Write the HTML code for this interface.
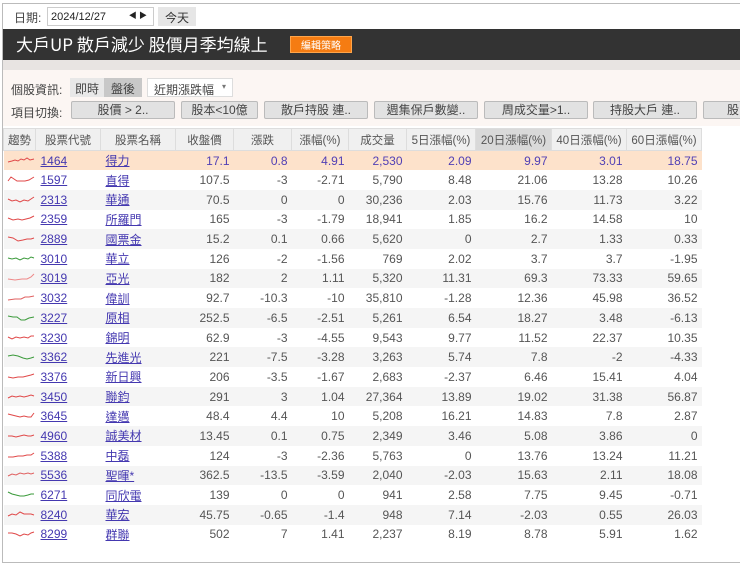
<!DOCTYPE html>
<html><head><meta charset="utf-8"><style>
*{box-sizing:border-box;margin:0;padding:0}
body{width:740px;height:557px;background:#fff;font-family:"Liberation Sans","Noto Sans CJK TC",sans-serif;font-size:12px;color:#444;position:relative;overflow:hidden}
.frame{position:absolute;left:2px;top:3px;width:740px;height:560px;border:1px solid #bbb;border-right:none}
.date{position:absolute;left:14px;top:9px;font-size:12px;color:#444}
.dbox{position:absolute;left:47px;top:7px;width:107px;height:19px;border:1px solid #ccc;background:#fff;font-size:11px;padding:3px 0 0 3px;color:#222}
.dbox span{position:absolute;right:6px;top:2px;font-size:8px}
.today{position:absolute;left:158px;top:7px;width:38px;height:19px;background:#e6e6e6;font-size:12px;text-align:center;padding-top:2px;color:#333}
.title{position:absolute;left:3px;top:29px;width:737px;height:31px;background:#333;color:#fff;font-size:17px;padding:3px 0 0 13px;font-family:"Noto Sans CJK TC",sans-serif;line-height:24px}
.edit{position:absolute;left:287px;top:7px;width:62px;height:17px;background:#f57c12;border:1px solid #ffa54a;font-size:10px;line-height:15px;text-align:center;color:#fff}
.strip{position:absolute;left:3px;top:60px;width:737px;height:10px;background:#e8e4e2}
.pink{position:absolute;left:3px;top:70px;width:737px;height:56px;background:#fcf6f3}
.lbl{position:absolute;font-size:12px;color:#444}
.seg{position:absolute;top:78px;height:19px;font-size:12px;text-align:center;padding-top:2px}
.sel{position:absolute;left:147px;top:78px;width:86px;height:19px;background:#fff;border:1px solid #ddd;padding:2px 0 0 6px;font-size:12px}
.sel span{position:absolute;right:6px;top:3px;font-size:8px;color:#777}
.btn{position:absolute;top:101px;height:18px;background:#e2e2e2;border:1px solid #bbb;border-radius:2px;text-align:center;font-size:12px;line-height:16px;color:#444}
table{position:absolute;left:3px;top:128px;border-collapse:collapse;width:698px;table-layout:fixed}
th{height:22px;background:#f0f0f0;border:1px solid #ddd;font-weight:normal;font-size:11.5px;color:#555}
th.d{background:#d9d9d9}
td{height:19.7px;text-align:right;padding-right:4px;font-size:12px;color:#555;white-space:nowrap}
td.c,td.n{text-align:left;padding-left:5px}
td.c a,td.n a{color:#4438b0;text-decoration:underline}
td.n{padding-left:5px}
tr.h td{background:#fde2cb;color:#5140b5}
tr:nth-child(odd) td{background:#f5f5f5}
tr.h:nth-child(odd) td{background:#fde2cb}
td.s{padding:0 0 0 3px;text-align:left}
</style></head><body>
<div class="frame"></div>
<div class="date">日期:</div>
<div class="dbox">2024/12/27<span>◀ ▶</span></div>
<div class="today">今天</div>
<div class="title">大戶UP 散戶減少 股價月季均線上<div class="edit">編輯策略</div></div>
<div class="strip"></div>
<div class="pink"></div>
<div class="lbl" style="left:11px;top:81px">個股資訊:</div>
<div class="seg" style="left:70px;width:34px;background:#e8e8e8">即時</div>
<div class="seg" style="left:104px;width:38px;background:#c8c8c8">盤後</div>
<div class="sel">近期漲跌幅<span>▾</span></div>
<div class="lbl" style="left:11px;top:104px">項目切換:</div>
<div class="btn" style="left:71px;width:104px">股價 &gt; 2..</div>
<div class="btn" style="left:181px;width:77px">股本&lt;10億</div>
<div class="btn" style="left:264px;width:104px">散戶持股 連..</div>
<div class="btn" style="left:374px;width:104px">週集保戶數變..</div>
<div class="btn" style="left:484px;width:104px">周成交量&gt;1..</div>
<div class="btn" style="left:593px;width:104px">持股大戶 連..</div>
<div class="btn" style="left:703px;width:60px">股</div>
<table>
<colgroup><col style="width:32px"><col style="width:65px"><col style="width:75px"><col style="width:58px"><col style="width:58px"><col style="width:57px"><col style="width:58px"><col style="width:69px"><col style="width:76px"><col style="width:75px"><col style="width:75px"></colgroup>
<tr><th>趨勢</th><th>股票代號</th><th>股票名稱</th><th>收盤價</th><th>漲跌</th><th>漲幅(%)</th><th>成交量</th><th>5日漲幅(%)</th><th class="d">20日漲幅(%)</th><th>40日漲幅(%)</th><th>60日漲幅(%)</th></tr>
<tbody id="b">
<tr class="h"><td class="s"><svg width="28" height="10"><polyline points="1,7 5,6 8,5 11,6 14,4 17,5 20,3 23,5 27,4" fill="none" stroke="#e04848" stroke-width="1"/></svg></td><td class="c"><a>1464</a></td><td class="n"><a>得力</a></td><td>17.1</td><td>0.8</td><td>4.91</td><td>2,530</td><td>2.09</td><td>9.97</td><td>3.01</td><td>18.75</td></tr>
<tr><td class="s"><svg width="28" height="10"><polyline points="1,7 4,3 7,5 10,7 14,7 18,7 22,6 27,3" fill="none" stroke="#e04848"/></svg></td><td class="c"><a>1597</a></td><td class="n"><a>直得</a></td><td>107.5</td><td>-3</td><td>-2.71</td><td>5,790</td><td>8.48</td><td>21.06</td><td>13.28</td><td>10.26</td></tr>
<tr><td class="s"><svg width="28" height="10"><polyline points="1,5 5,7 9,6 13,8 17,6 21,7 24,5 27,3" fill="none" stroke="#e04848"/></svg></td><td class="c"><a>2313</a></td><td class="n"><a>華通</a></td><td>70.5</td><td>0</td><td>0</td><td>30,236</td><td>2.03</td><td>15.76</td><td>11.73</td><td>3.22</td></tr>
<tr><td class="s"><svg width="28" height="10"><polyline points="1,5 6,7 11,6 15,7 19,6 23,5 27,3" fill="none" stroke="#e04848"/></svg></td><td class="c"><a>2359</a></td><td class="n"><a>所羅門</a></td><td>165</td><td>-3</td><td>-1.79</td><td>18,941</td><td>1.85</td><td>16.2</td><td>14.58</td><td>10</td></tr>
<tr><td class="s"><svg width="28" height="10"><polyline points="1,4 6,5 11,8 16,7 20,6 24,6 27,5" fill="none" stroke="#e04848"/></svg></td><td class="c"><a>2889</a></td><td class="n"><a>國票金</a></td><td>15.2</td><td>0.1</td><td>0.66</td><td>5,620</td><td>0</td><td>2.7</td><td>1.33</td><td>0.33</td></tr>
<tr><td class="s"><svg width="28" height="10"><polyline points="1,5 5,6 9,5 13,7 17,5 21,6 24,4 27,5" fill="none" stroke="#3a9a3a"/></svg></td><td class="c"><a>3010</a></td><td class="n"><a>華立</a></td><td>126</td><td>-2</td><td>-1.56</td><td>769</td><td>2.02</td><td>3.7</td><td>3.7</td><td>-1.95</td></tr>
<tr><td class="s"><svg width="28" height="10"><polyline points="1,7 8,8 15,7 20,7 24,5 27,2" fill="none" stroke="#ee8888"/></svg></td><td class="c"><a>3019</a></td><td class="n"><a>亞光</a></td><td>182</td><td>2</td><td>1.11</td><td>5,320</td><td>11.31</td><td>69.3</td><td>73.33</td><td>59.65</td></tr>
<tr><td class="s"><svg width="28" height="10"><polyline points="1,8 8,7 14,7 18,5 22,5 27,4" fill="none" stroke="#e06060"/></svg></td><td class="c"><a>3032</a></td><td class="n"><a>偉訓</a></td><td>92.7</td><td>-10.3</td><td>-10</td><td>35,810</td><td>-1.28</td><td>12.36</td><td>45.98</td><td>36.52</td></tr>
<tr><td class="s"><svg width="28" height="10"><polyline points="1,4 6,5 10,5 14,8 18,8 22,6 27,5" fill="none" stroke="#3a9a3a"/></svg></td><td class="c"><a>3227</a></td><td class="n"><a>原相</a></td><td>252.5</td><td>-6.5</td><td>-2.51</td><td>5,261</td><td>6.54</td><td>18.27</td><td>3.48</td><td>-6.13</td></tr>
<tr><td class="s"><svg width="28" height="10"><polyline points="1,5 5,7 9,5 13,6 17,5 21,6 24,4 27,4" fill="none" stroke="#e04848"/></svg></td><td class="c"><a>3230</a></td><td class="n"><a>錦明</a></td><td>62.9</td><td>-3</td><td>-4.55</td><td>9,543</td><td>9.77</td><td>11.52</td><td>22.37</td><td>10.35</td></tr>
<tr><td class="s"><svg width="28" height="10"><polyline points="1,5 6,4 11,5 16,7 20,8 24,7 27,6" fill="none" stroke="#3a9a3a"/></svg></td><td class="c"><a>3362</a></td><td class="n"><a>先進光</a></td><td>221</td><td>-7.5</td><td>-3.28</td><td>3,263</td><td>5.74</td><td>7.8</td><td>-2</td><td>-4.33</td></tr>
<tr><td class="s"><svg width="28" height="10"><polyline points="1,6 6,7 11,6 16,6 20,5 24,4 27,3" fill="none" stroke="#e04848"/></svg></td><td class="c"><a>3376</a></td><td class="n"><a>新日興</a></td><td>206</td><td>-3.5</td><td>-1.67</td><td>2,683</td><td>-2.37</td><td>6.46</td><td>15.41</td><td>4.04</td></tr>
<tr><td class="s"><svg width="28" height="10"><polyline points="1,7 5,5 9,6 13,5 17,6 21,5 24,4 27,5" fill="none" stroke="#e04848"/></svg></td><td class="c"><a>3450</a></td><td class="n"><a>聯鈞</a></td><td>291</td><td>3</td><td>1.04</td><td>27,364</td><td>13.89</td><td>19.02</td><td>31.38</td><td>56.87</td></tr>
<tr><td class="s"><svg width="28" height="10"><polyline points="1,4 5,5 9,6 13,7 17,6 21,7 24,7 27,3" fill="none" stroke="#e04848"/></svg></td><td class="c"><a>3645</a></td><td class="n"><a>達邁</a></td><td>48.4</td><td>4.4</td><td>10</td><td>5,208</td><td>16.21</td><td>14.83</td><td>7.8</td><td>2.87</td></tr>
<tr><td class="s"><svg width="28" height="10"><polyline points="1,6 5,6 9,7 13,6 17,5 21,6 24,6 27,5" fill="none" stroke="#e04848"/></svg></td><td class="c"><a>4960</a></td><td class="n"><a>誠美材</a></td><td>13.45</td><td>0.1</td><td>0.75</td><td>2,349</td><td>3.46</td><td>5.08</td><td>3.86</td><td>0</td></tr>
<tr><td class="s"><svg width="28" height="10"><polyline points="1,7 6,7 11,6 16,6 20,5 24,5 27,3" fill="none" stroke="#e04848"/></svg></td><td class="c"><a>5388</a></td><td class="n"><a>中磊</a></td><td>124</td><td>-3</td><td>-2.36</td><td>5,763</td><td>0</td><td>13.76</td><td>13.24</td><td>11.21</td></tr>
<tr><td class="s"><svg width="28" height="10"><polyline points="1,7 5,5 9,6 13,4 17,5 21,4 24,5 27,4" fill="none" stroke="#e06060"/></svg></td><td class="c"><a>5536</a></td><td class="n"><a>聖暉*</a></td><td>362.5</td><td>-13.5</td><td>-3.59</td><td>2,040</td><td>-2.03</td><td>15.63</td><td>2.11</td><td>18.08</td></tr>
<tr><td class="s"><svg width="28" height="10"><polyline points="1,3 5,5 9,6 13,7 17,7 21,6 24,5 27,5" fill="none" stroke="#3a9a3a"/></svg></td><td class="c"><a>6271</a></td><td class="n"><a>同欣電</a></td><td>139</td><td>0</td><td>0</td><td>941</td><td>2.58</td><td>7.75</td><td>9.45</td><td>-0.71</td></tr>
<tr><td class="s"><svg width="28" height="10"><polyline points="1,7 5,5 9,6 13,3 17,5 21,5 24,5 27,6" fill="none" stroke="#e04848"/></svg></td><td class="c"><a>8240</a></td><td class="n"><a>華宏</a></td><td>45.75</td><td>-0.65</td><td>-1.4</td><td>948</td><td>7.14</td><td>-2.03</td><td>0.55</td><td>26.03</td></tr>
<tr><td class="s"><svg width="28" height="10"><polyline points="1,5 5,5 9,6 13,8 17,6 21,7 24,5 27,4" fill="none" stroke="#e04848"/></svg></td><td class="c"><a>8299</a></td><td class="n"><a>群聯</a></td><td>502</td><td>7</td><td>1.41</td><td>2,237</td><td>8.19</td><td>8.78</td><td>5.91</td><td>1.62</td></tr>
</tbody></table>
</body></html>
